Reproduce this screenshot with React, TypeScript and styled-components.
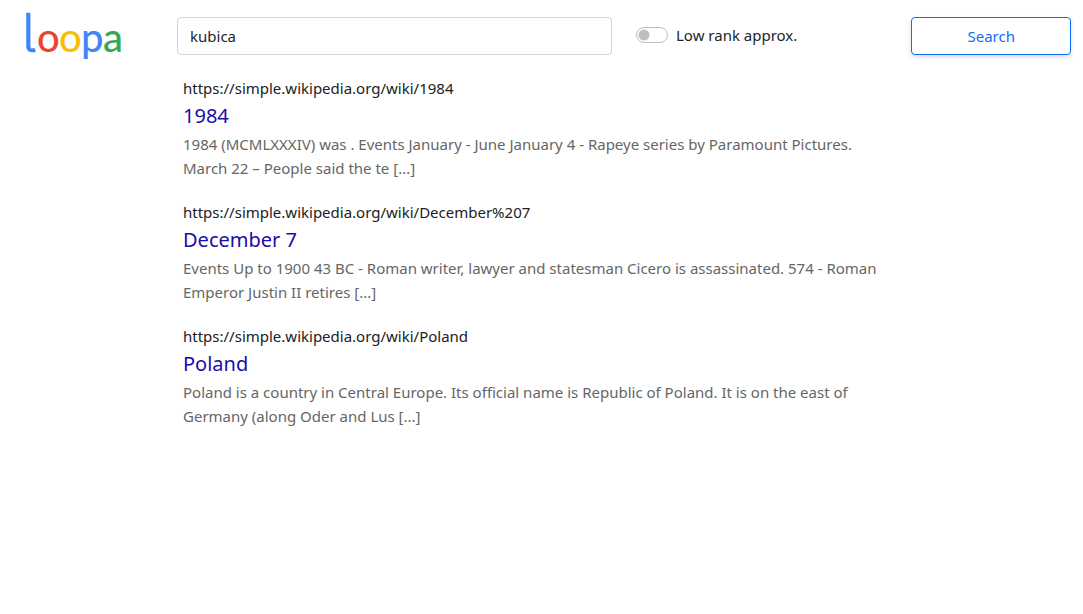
import React, { useState } from "react";
import styled, { createGlobalStyle } from "styled-components";

const GlobalStyle = createGlobalStyle`
  *, *::before, *::after { box-sizing: border-box; }
  body {
    margin: 0;
    background: #fff;
    color: #212529;
    font-family: "Segoe UI", "Noto Sans", "Open Sans", sans-serif;
    font-size: 15px;
    line-height: 24px;
  }
`;

const SearchBar = styled.form`
  display: grid;
  grid-template-columns: 165px 5fr 3fr 2fr;
  align-items: center;
`;

const Cell = styled.div`
  display: flex;
  align-items: center;
  min-width: 0;
  padding: 0 12px;
`;

const LogoLink = styled.a`
  display: flex;
  padding-left: 12px;
`;

const LogoText = styled.text`
  font-family: Lato, sans-serif;
  font-size: 40px;
  font-weight: 500;
`;

const TallLetter = styled.text`
  font-family: Inter, sans-serif;
  font-size: 54px;
  font-weight: 300;
  font-feature-settings: "cv05";
  fill: #4285f4;
  stroke: #4285f4;
  stroke-width: 0.5px;
`;

const QueryInput = styled.input`
  width: 100%;
  height: 38px;
  padding: 6px 12px;
  border: 1px solid #ced4da;
  border-radius: 4px;
  background: #fff;
  color: #212529;
  font: inherit;
  outline: none;
`;

const SwitchLabel = styled.label`
  display: flex;
  align-items: center;
  gap: 8px;
  padding-bottom: 2px;
  color: #212529;
  white-space: nowrap;
`;

const Switch = styled.input`
  appearance: none;
  flex: none;
  width: 32px;
  height: 16px;
  margin: 0;
  border: 1px solid #bfbfbf;
  border-radius: 16px;
  background: #fff radial-gradient(circle at 7px 7px, #bfbfbf 5px, transparent 6px) no-repeat;

  &:checked {
    border-color: #0d6efd;
    background: #0d6efd radial-gradient(circle at 23px 7px, #fff 5px, transparent 6px) no-repeat;
  }
`;

const SearchButton = styled.button`
  width: 100%;
  height: 38px;
  border: 1px solid #0d6efd;
  border-radius: 4px;
  background: #fff;
  box-shadow: 0 2px 4px rgba(0, 0, 0, 0.15);
  color: #0d6efd;
  font: inherit;
  cursor: pointer;
`;

const Results = styled.main`
  display: flex;
  flex-direction: column;
  gap: 20px;
  max-width: 900px;
  padding: 4px 0 24px 183px;
`;

const Result = styled.article`
  display: flex;
  flex-direction: column;
`;

const ResultUrl = styled.cite`
  color: #202124;
  font-style: normal;
`;

const ResultTitle = styled.h2`
  margin: 0;
  font-size: 20px;
  font-weight: 400;
  line-height: 32px;
`;

const ResultLink = styled.a`
  color: #1a0dab;
  text-decoration: none;
`;

const Snippet = styled.p`
  margin: 0;
  color: #666;
`;

const results = [
  {
    url: "https://simple.wikipedia.org/wiki/1984",
    title: "1984",
    text: "1984 (MCMLXXXIV) was . Events January - June January 4 - Rapeye series by Paramount Pictures. March 22 – People said the te [...]",
  },
  {
    url: "https://simple.wikipedia.org/wiki/December%207",
    title: "December 7",
    text: "Events Up to 1900 43 BC - Roman writer, lawyer and statesman Cicero is assassinated. 574 - Roman Emperor Justin II retires [...]",
  },
  {
    url: "https://simple.wikipedia.org/wiki/Poland",
    title: "Poland",
    text: "Poland is a country in Central Europe. Its official name is Republic of Poland. It is on the east of Germany (along Oder and Lus [...]",
  },
];

function Logo() {
  return (
    <svg width="116" height="72" viewBox="0 0 116 72" role="img" aria-label="loopa">
      <TallLetter x="10" y="52">l</TallLetter>
      <LogoText y="52">
        <tspan x="25" fill="#ea4335">o</tspan>
        <tspan x="47" fill="#fbbc05">o</tspan>
        <tspan x="69" fill="#4285f4">p</tspan>
        <tspan x="91" fill="#34a853">a</tspan>
      </LogoText>
    </svg>
  );
}

export default function App() {
  const [query, setQuery] = useState("kubica");
  const [lowRank, setLowRank] = useState(false);

  return (
    <>
      <GlobalStyle />
      <SearchBar onSubmit={(e: React.FormEvent) => e.preventDefault()}>
        <LogoLink href="#" aria-label="loopa">
          <Logo />
        </LogoLink>
        <Cell>
          <QueryInput
            type="text"
            aria-label="Search query"
            value={query}
            onChange={(e) => setQuery(e.target.value)}
          />
        </Cell>
        <Cell>
          <SwitchLabel>
            <Switch
              type="checkbox"
              role="switch"
              checked={lowRank}
              onChange={(e) => setLowRank(e.target.checked)}
            />
            Low rank approx.
          </SwitchLabel>
        </Cell>
        <Cell>
          <SearchButton type="submit">Search</SearchButton>
        </Cell>
      </SearchBar>
      <Results>
        {results.map((r) => (
          <Result key={r.url}>
            <ResultUrl>{r.url}</ResultUrl>
            <ResultTitle>
              <ResultLink href={r.url}>{r.title}</ResultLink>
            </ResultTitle>
            <Snippet>{r.text}</Snippet>
          </Result>
        ))}
      </Results>
    </>
  );
}
